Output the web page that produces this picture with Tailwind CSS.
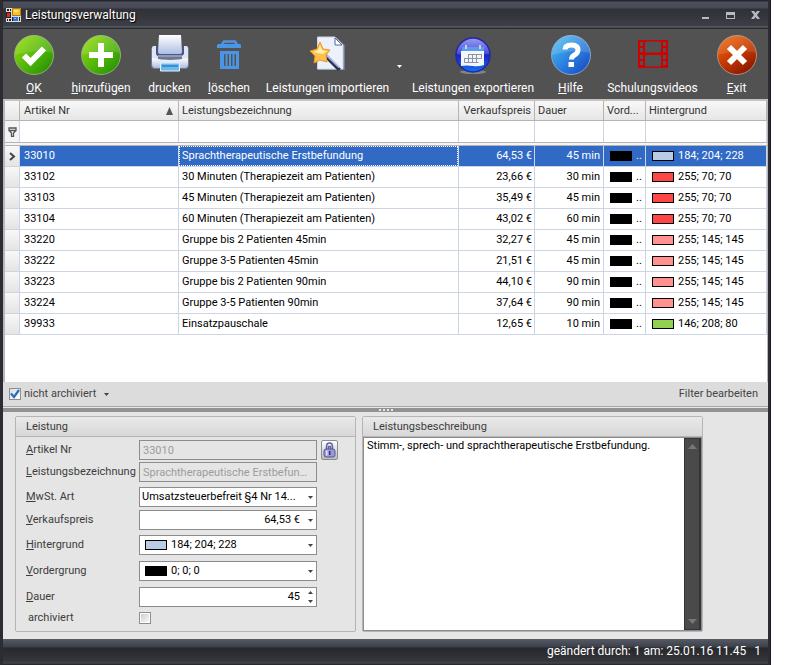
<!DOCTYPE html>
<html lang="de">
<head>
<meta charset="utf-8">
<title>Leistungsverwaltung</title>
<script src="https://cdn.jsdelivr.net/npm/@tailwindcss/browser@4"></script>
</head>
<body class="bg-white font-['Roboto',sans-serif] text-[11px] leading-[14px] text-[#222]">
<div class="mr-[29px] min-h-screen flex flex-col bg-[#2b2d33] pl-[3px] pr-0.5 border-x border-[#1c1d22] -ml-px">

  <header class="h-[29px] shrink-0 flex items-center pl-[3px] bg-[linear-gradient(#24252c_0_1px,#4d505c_2px,#474a55_8px,#303136_9px,#3d3f47_26px,#6a6c75_27px,#2a2b30_28px)]">
    <svg class="w-[15px] h-[14px]" viewBox="0 0 15 14">
      <path fill="#ddd" d="M0 0h15v14H0z"/><path fill="#222" d="M1 1h2v2H1zM4 1h1v2H4zM0 4h5v6H0zM1 11h1v2H1zM3 11h2v2H3zM6 9h1v4H6zM13 9h1v4h-1z"/>
      <path fill="#e02a1c" d="M1 5h3v4H1z"/><path fill="#f9c32b" stroke="#b07a10" d="M6.500.5h8v7h-8z"/><path fill="#fbe38a" d="M8 2h4v2H8z"/><path fill="#2f6fd8" d="M7 9h5v4H7z"/><path fill="#8db8f4" d="M8 10h2v1H8z"/>
    </svg>
    <h1 class="ml-1 text-[12px] text-white [text-shadow:1px_1px_1px_#000]">Leistungsverwaltung</h1>
    <div class="ml-auto flex text-[#b4bac6]">
      <button aria-label="Minimieren" class="w-[25px] h-4 flex items-center justify-center"><svg class="w-[11px] h-[10px]" viewBox="0 0 11 10"><path fill="currentColor" d="M2 7h7v2H2z"/></svg></button>
      <button aria-label="Maximieren" class="w-[25px] h-4 flex items-center justify-center"><svg class="w-[11px] h-[10px]" viewBox="0 0 11 10"><path fill="currentColor" fill-rule="evenodd" d="M1 2h9v7H1zM2 5v3h7V5z"/></svg></button>
      <button aria-label="Schließen" class="w-[25px] h-4 flex items-center justify-center"><svg class="w-[11px] h-[10px]" viewBox="0 0 11 10"><path fill="currentColor" d="M1 1h3l1.500 2L7 1h3L7 5l3 4H7L5.500 7 4 9H1l3-4z"/></svg></button>
    </div>
  </header>

  <nav class="h-[70px] shrink-0 flex pl-0.5 bg-[#525252] text-white text-[12px] leading-4 whitespace-nowrap [&>button]:flex [&>button]:flex-col [&>button]:items-center [&>button]:pt-[5px] [&>button]:gap-[4px] [&>button]:shrink-0 [&_svg]:shrink-0">
    <button class="w-[58px]">
      <svg class="size-[42px]" viewBox="0 0 42 42"><defs><linearGradient id="g" x1="0" y1="0" x2="1" y2="1"><stop stop-color="#9be005"/><stop offset=".5" stop-color="#55b80b"/><stop offset="1" stop-color="#1c8a00"/></linearGradient></defs><circle cx="21" cy="21" r="19.500" fill="url(#g)" stroke="#8fae78"/><path d="M2 21a19 19 0 0 1 38-2C30 16 14 17 2 21z" fill="#fff" opacity=".13"/><path d="M11 21.500l6.500 6.500L31 14.500" fill="none" stroke="#fff" stroke-width="6"/></svg>
      <span><u>O</u>K</span></button>
    <button class="w-[76px]">
      <svg class="size-[42px]" viewBox="0 0 42 42"><circle cx="21" cy="21" r="19.500" fill="url(#g)" stroke="#8fae78"/><path d="M2 21a19 19 0 0 1 38-2C30 16 14 17 2 21z" fill="#fff" opacity=".13"/><path d="M18 9h6v9h9v6h-9v9h-6v-9H9v-6h9z" fill="#fff"/></svg>
      <span><u>h</u>inzufügen</span></button>
    <button class="w-[61px]">
      <svg class="size-[42px]" viewBox="0 0 42 42"><defs><linearGradient id="p" x1="0" y1="0" x2="0" y2="1"><stop stop-color="#fff"/><stop offset="1" stop-color="#aebde2"/></linearGradient></defs><rect x="2" y="12" width="38" height="23" rx="4" fill="#a9c4f5" opacity=".35"/><path d="M3 14q0-2 2-2h4v13H3zM39 14q0-2-2-2h-4v13h6z" fill="#dde5f7"/><path d="M3 24q18 4 36 0v6q0 4-3 4H6q-3 0-3-4z" fill="url(#p)"/><path d="M7 12h28v8q-2 3-5 3H12q-4 0-5-3z" fill="#4c5482"/><path d="M10 1h22l1 17q0 2-3 2H12q-3 0-3-2z" fill="url(#p)"/><path d="M9 21h24v2H9z" fill="#8d98c4"/><path d="M11.500 29h19v8h-19z" fill="#6cb9ec" stroke="#e4f4ff"/><path d="M13 31h16v2H13z" fill="#3e8fd0"/></svg>
      <span>drucken</span></button>
    <button class="w-[58px]">
      <svg class="size-[42px]" viewBox="0 0 42 42"><path fill="none" stroke="#4a95e6" stroke-width="2.500" d="M14 10.500l2-3h11l2 3"/><path fill="#4a95e6" fill-rule="evenodd" d="M10 10h22l1 1v3H9v-3zM12 17h19v18H12zM16 20v12h1.500V20zM19.500 20v12H21V20zM23 20v12h1.500V20zM26.500 20v12H28V20z"/></svg>
      <span><u>l</u>öschen</span></button>
    <button class="w-[139px]">
      <svg class="size-[42px]" viewBox="0 0 42 42"><path d="M11 3h18l9 8v25H11z" fill="#a9c4f5" opacity=".35"/><path d="M10.500 3h17l8.500 8v24H10.500z" fill="#edf1fb" stroke="#c9d5ec"/><path d="M28 4v7h7z" fill="#fff" stroke="#55679b"/><path d="M19 20l15 15-3 2-15-15z" fill="#2b3255"/><path d="M20 20l13 13-1.500 1L19 22z" fill="#a8b6d8"/><path d="M13 8l3 7 7 1-4 5 1 7-7-2-6 3 1-7-5-5 7-2z" fill="#fdc14b" stroke="#ec961e"/><path d="M13 11l2 5 5 1-4 3-6-1-4-1 5-2z" fill="#ffedb0"/></svg>
      <span>Leistungen importieren</span></button>
    <button aria-label="Weitere Importoptionen" class="w-2 justify-center"><svg class="w-[5px] h-[3px] -ml-1" viewBox="0 0 5 3"><path fill="#fff" d="M0 0h5L2.500 3z"/></svg></button>
    <button class="w-[136px]">
      <svg class="size-[42px]" viewBox="0 0 42 42"><defs><linearGradient id="b" x1="0" y1="0" x2="0" y2="1"><stop stop-color="#9a9df0"/><stop offset=".45" stop-color="#4a50dc"/><stop offset=".5" stop-color="#1c22c0"/><stop offset="1" stop-color="#0f77ee"/></linearGradient></defs><ellipse cx="21" cy="38" rx="13" ry="2" fill="#999" opacity=".7"/><circle cx="21" cy="21" r="17" fill="url(#b)" stroke="#2526a8" stroke-width="1.500"/><path d="M10 13h22v5H10z" fill="#5b9bf0"/><path d="M9 17h23v14q-6 2-11 1-7-1-12 0z" fill="#f4f6fa"/><path d="M14 11v4M28 11v4" stroke="#c8d0e0" stroke-width="2"/><path fill="none" stroke="#8a93a8" d="M16.500 20.500h13M12.500 24.500h17M12.500 28.500h14M12.500 24v4.500M16.500 20v8.500M20.500 20v8.500M24.500 20v8.500M29.500 20v4.500"/></svg>
      <span>Leistungen exportieren</span></button>
    <button class="w-[59px]">
      <svg class="size-[42px]" viewBox="0 0 42 42"><defs><linearGradient id="h" x1="0" y1="0" x2="1" y2="1"><stop stop-color="#4cc4f2"/><stop offset=".5" stop-color="#2c83e0"/><stop offset="1" stop-color="#1742bd"/></linearGradient></defs><circle cx="21" cy="21" r="19.500" fill="url(#h)" stroke="#86a4c8"/><path d="M2 21a19 19 0 0 1 38-2C30 16 14 17 2 21z" fill="#fff" opacity=".15"/><path d="M15 15.500q0-4.500 6.500-4.500t6.500 5q0 3-3.500 5-3 1.500-3 4.500" fill="none" stroke="#fff" stroke-width="5"/><path d="M18.500 28H24v5h-5.500z" fill="#fff"/></svg>
      <span><u>H</u>ilfe</span></button>
    <button class="w-[105px]">
      <svg class="size-[42px]" viewBox="0 0 42 42"><path fill="#cc0205" fill-rule="evenodd" d="M6 6h30v28H6zM14.500 7.500q-1.500 0-1.500 1.500v8q0 1.500 1.500 1.500h13q1.500 0 1.500-1.500V9q0-1.500-1.500-1.500zM14.500 21q-1.500 0-1.500 1.500V31q0 1.500 1.500 1.500h13q1.500 0 1.500-1.500v-8.500q0-1.500-1.500-1.500zM8 8v4h3V8zM8 14v4h3v-4zM8 21v4h3v-4zM8 27v4h3v-4zM31 8v4h3V8zM31 14v4h3v-4zM31 21v4h3v-4zM31 27v4h3v-4z"/></svg>
      <span>Schulungsvideos</span></button>
    <button class="w-[63px]">
      <svg class="size-[42px]" viewBox="0 0 42 42"><defs><linearGradient id="r" x1="0" y1="0" x2=".6" y2="1"><stop stop-color="#f07414"/><stop offset=".5" stop-color="#cf4103"/><stop offset="1" stop-color="#8e1a00"/></linearGradient></defs><circle cx="21" cy="21" r="19.500" fill="url(#r)" stroke="#b08f7c"/><path d="M2 21a19 19 0 0 1 38-2C30 16 14 17 2 21z" fill="#fff" opacity=".1"/><path d="M13 13l16 16M29 13L13 29" stroke="#fff" stroke-width="6"/></svg>
      <span><u>E</u>xit</span></button>
  </nav>

  <main class="flex-1 flex flex-col bg-[#e5e5e5]">
    <section class="flex-1 flex flex-col bg-white border-t-2 border-l-2 border-r border-t-[#c6c2c2] border-x-[#b8b8b8]">
      <table class="w-full table-fixed border-separate border-spacing-0 text-black whitespace-nowrap">
        <colgroup><col class="w-[15px]"><col class="w-[159px]"><col><col class="w-[76px]"><col class="w-[69px]"><col class="w-[42px]"><col class="w-[121px]"></colgroup>
        <thead>
          <tr class="h-5 text-left text-[#333] [&>th]:font-normal [&>th]:p-0 [&>th]:border-r [&>th]:border-b [&>th]:border-[#b4b4b4] [&>th]:bg-linear-to-b [&>th]:from-[#f8f8f8] [&>th]:to-[#e6e6e6]">
            <th aria-label="Markierung"></th>
            <th><div class="flex items-center justify-between pl-1 pr-[5px]">Artikel Nr<svg class="w-[7px] h-2" viewBox="0 0 7 8"><path fill="#555" d="M3.500 0L7 8H0z"/></svg></div></th>
            <th><div class="pl-[3px]">Leistungsbezeichnung</div></th>
            <th><div class="pr-[3px] text-right">Verkaufspreis</div></th>
            <th><div class="pl-[3px]">Dauer</div></th>
            <th><div class="pl-[3px]">Vord...</div></th>
            <th><div class="pl-[3px]">Hintergrund</div></th>
          </tr>
          <tr class="h-[21px] [&>td]:p-0 [&>td]:border-r [&>td]:border-[#ccd5e4]">
            <td class="bg-[#f4f4f4]"><svg class="w-[9px] h-[10px] ml-[3px]" viewBox="0 0 9 10"><path fill="none" stroke="#555" stroke-width="1.300" d="M1 1h7v2.500H1zM1.500 4l2 2v3.500h2V6l2-2"/></svg></td>
            <td></td><td></td><td></td><td></td><td></td><td></td>
          </tr>
          <tr class="h-[4px]"><td colspan="7" class="p-0 bg-[#f4f4f4] border-y border-[#b4b4b4]"></td></tr>
        </thead>
        <tbody id="rows"></tbody>
      </table>
      <div class="flex-1"></div>
    </section>

    <div class="h-[25px] shrink-0 flex items-center px-1.5 bg-[#dcdcdc] border-b border-[#a8a8a8] text-[#444]">
      <label class="flex items-center gap-[3px]">
        <input type="checkbox" checked class="peer appearance-none size-3 border border-[#8e8e8e] bg-[linear-gradient(135deg,#d8dde4,#fff)] bg-white">
        <svg class="-ml-[14px] mr-px w-[10px] h-[10px] hidden peer-checked:block pointer-events-none" viewBox="0 0 10 10"><path fill="none" stroke="#2b6cb8" stroke-width="2.200" d="M1 4.500l3 3.500 5-7"/></svg>
        <span>nicht archiviert</span>
      </label>
      <button aria-label="Filterliste" class="ml-2"><svg class="w-[5px] h-[3px]" viewBox="0 0 5 3"><path fill="#444" d="M0 0h5L2.500 3z"/></svg></button>
      <button class="ml-auto pr-1">Filter bearbeiten</button>
    </div>
    <div class="h-[4px] mt-px shrink-0 flex items-center justify-center gap-0.5 bg-[#929292] [&>i]:size-0.5 [&>i]:bg-[#e8e8e8]"><i></i><i></i><i></i><i></i></div>

    <section class="flex pl-3 pr-[65px] pt-1 pb-[7px] gap-1.5">
      <form class="w-[341px] shrink-0 border border-[#b5b5b5] rounded-xs text-[#3c3c3c]">
        <h2 class="h-5 flex items-center pl-2.5 bg-linear-to-b from-[#e9e9e9] to-[#d8d8d8] border-b border-[#b5b5b5]">Leistung</h2>
        <div class="flex flex-col pl-2.5 pr-2.5 pt-[3px] pb-[6px] [&>div]:flex [&>div]:items-center [&_label]:w-[113px] [&_label]:shrink-0 [&_label]:whitespace-nowrap">
          <div><label for="nr"><u>A</u>rtikel Nr</label><input id="nr" disabled value="33010" class="w-[178px] h-5 px-[3px] border border-[#8c8c8c] text-[#9c9c9c]"><button type="button" aria-label="Sperre" class="ml-1 w-[17px] h-5 flex items-center justify-center border border-[#8c8c8c] rounded-xs bg-linear-to-b from-white to-[#bcbcbc]"><svg class="w-[13px] h-[16px]" viewBox="0 0 13 16"><path fill="none" stroke="#6262a8" stroke-width="1.500" d="M3.500 8V4.500Q3.500 1 6.500 1t3 3.500V8M5.500 7V4.500h2V7"/><rect x="1" y="7" width="11" height="8" rx="2" fill="#9a9ad2" stroke="#56569c"/><path fill="#e4e4fa" d="M3 8.500h1.500v5H3z"/><path fill="#34347c" d="M6 9h1.500v4H6z"/></svg></button></div>
          <div class="mt-0.5"><label for="bz"><u>L</u>eistungsbezeichnung</label><input id="bz" disabled value="Sprachtherapeutische Erstbefundung" class="w-[178px] h-5 px-[3px] border border-[#8c8c8c] text-[#9c9c9c] text-ellipsis"></div>
          <div class="mt-[5px]"><label for="mw"><u>M</u>wSt. Art</label><span class="w-[178px] h-5 flex items-center pr-[3px] bg-white border border-[#8c8c8c] text-black"><select id="mw" class="flex-1 min-w-0 appearance-none pl-0.5 pr-2 text-ellipsis"><option>Umsatzsteuerbefreit §4 Nr 14...</option></select><svg class="w-[5px] h-[3px] shrink-0 pointer-events-none" viewBox="0 0 5 3"><path fill="#444" d="M0 0h5L2.500 3z"/></svg></span></div>
          <div class="mt-[3px]"><label for="vp"><u>V</u>erkaufspreis</label><span class="w-[178px] h-5 flex items-center gap-2 pr-[3px] bg-white border border-[#8c8c8c] text-black"><input id="vp" value="64,53 €" class="flex-1 min-w-0 text-right"><svg class="w-[5px] h-[3px] shrink-0" viewBox="0 0 5 3"><path fill="#444" d="M0 0h5L2.500 3z"/></svg></span></div>
          <div class="mt-[5px]"><label for="hg"><u>H</u>intergrund</label><span class="w-[178px] h-5 flex items-center pl-[5px] pr-[3px] bg-white border border-[#8c8c8c] text-black"><i class="w-[22px] h-[10px] mr-1 border border-black bg-[#b8cce4]"></i><select id="hg" class="flex-1 min-w-0 appearance-none"><option>184; 204; 228</option></select><svg class="w-[5px] h-[3px] shrink-0 pointer-events-none" viewBox="0 0 5 3"><path fill="#444" d="M0 0h5L2.500 3z"/></svg></span></div>
          <div class="mt-[6px]"><label for="vg"><u>V</u>ordergrung</label><span class="w-[178px] h-5 flex items-center pl-[5px] pr-[3px] bg-white border border-[#8c8c8c] text-black"><i class="w-[22px] h-[10px] mr-1 border border-black bg-black"></i><select id="vg" class="flex-1 min-w-0 appearance-none"><option>0; 0; 0</option></select><svg class="w-[5px] h-[3px] shrink-0 pointer-events-none" viewBox="0 0 5 3"><path fill="#444" d="M0 0h5L2.500 3z"/></svg></span></div>
          <div class="mt-[6px]"><label for="da"><u>D</u>auer</label><span class="w-[178px] h-5 flex items-center gap-2 pr-[3px] bg-white border border-[#8c8c8c] text-black"><input id="da" value="45" class="flex-1 min-w-0 text-right"><svg class="w-[5px] h-[12px] shrink-0" viewBox="0 0 5 12"><path fill="#444" d="M0 3h5L2.500 0zM0 9h5L2.500 12z"/></svg></span></div>
          <div class="mt-1"><label for="ar" class="pl-0.5">archiviert</label><input id="ar" type="checkbox" class="appearance-none size-3 border border-[#8e8e8e] shadow-[inset_0_0_0_1px_#fff] bg-linear-to-br from-[#c8c8c8] to-white"></div>
        </div>
      </form>
      <div class="flex-1 min-w-0 flex flex-col border border-[#b5b5b5] rounded-xs">
        <h2 class="h-5 shrink-0 bg-linear-to-b from-[#e9e9e9] to-[#d8d8d8] border-b border-[#b5b5b5] text-[#3c3c3c]"><label for="txt" class="h-full flex items-center pl-2.5">Leistungsbeschreibung</label></h2>
        <div class="flex-1 flex border border-[#8c8c8c] bg-white">
          <textarea id="txt" class="flex-1 min-w-0 resize-none pl-[3px] pt-px text-black overflow-hidden">Stimm-, sprech- und sprachtherapeutische Erstbefundung.</textarea>
          <div class="w-[17px] flex flex-col items-center justify-between py-[5px] bg-[#4a4a4a] border-l border-r-2 border-y border-[#33343a]">
            <svg class="w-[9px] h-[5px]" viewBox="0 0 9 5"><path fill="#777" d="M0 5h9L4.500 0z"/></svg>
            <svg class="w-[9px] h-[5px]" viewBox="0 0 9 5"><path fill="#777" d="M0 0h9L4.500 5z"/></svg>
          </div>
        </div>
      </div>
    </section>
  </main>

  <footer class="h-[26px] shrink-0 flex items-center justify-end gap-2 pr-[7px] pb-[3px] text-white text-[12px] bg-[linear-gradient(#565b66,#3c3f48_8px,#27282c_9px,#35363c_22px,#42444b_24px,#202126)]"><span>geändert durch: 1 am: 25.01.16 11.45</span><span>1</span></footer>
</div>
<script>
const data = [
  ["33010","Sprachtherapeutische Erstbefundung","64,53","45","184; 204; 228"],
  ["33102","30 Minuten (Therapiezeit am Patienten)","23,66","30","255; 70; 70"],
  ["33103","45 Minuten (Therapiezeit am Patienten)","35,49","45","255; 70; 70"],
  ["33104","60 Minuten (Therapiezeit am Patienten)","43,02","60","255; 70; 70"],
  ["33220","Gruppe bis 2 Patienten 45min","32,27","45","255; 145; 145"],
  ["33222","Gruppe 3-5 Patienten 45min","21,51","45","255; 145; 145"],
  ["33223","Gruppe bis 2 Patienten 90min","44,10","90","255; 145; 145"],
  ["33224","Gruppe 3-5 Patienten 90min","37,64","90","255; 145; 145"],
  ["39933","Einsatzpauschale","12,65","10","146; 208; 80"]
];
document.getElementById("rows").innerHTML = data.map(([nr, name, price, min, color], i) => `
  <tr class="h-[21px] [&>td]:p-0 [&>td]:border-r [&>td]:border-b [&>td]:border-[#ccd5e4] ${i ? "" : "bg-[#316ac5] text-white"}">
    <td class="bg-linear-to-b from-[#f8f8f8] to-[#e4e4e4]">${i ? "" : '<svg class="w-[7px] h-[9px] ml-1" viewBox="0 0 7 9"><path fill="none" stroke="#444" stroke-width="2" d="M1 1l4 3.500L1 8"/></svg>'}</td>
    <td><div class="pl-1">${nr}</div></td>
    <td><div class="h-5 flex items-center pl-0.5 border border-dotted ${i ? "border-transparent" : "border-white"}">${name}</div></td>
    <td><div class="pr-0.5 text-right">${price} €</div></td>
    <td><div class="pr-[3px] text-right">${min} min</div></td>
    <td><div class="flex items-center pl-1.5 gap-1"><i class="w-[22px] h-[10px] shrink-0 bg-black"></i>..</div></td>
    <td><div class="flex items-center pl-1.5 gap-1"><i class="w-[22px] h-[10px] border border-black" style="background:rgb(${color.replaceAll(";", ",")})"></i>${color}</div></td>
  </tr>`).join("");
</script>
</body>
</html>
